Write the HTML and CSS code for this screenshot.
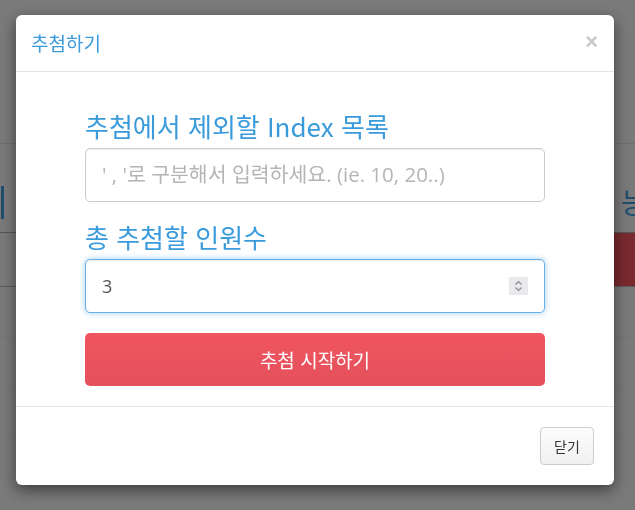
FILE: index.html
```html
<!DOCTYPE html>
<html lang="ko">
<head>
<meta charset="utf-8">
<title>추첨하기</title>
<link rel="stylesheet" href="styles.css">
</head>
<body>
<div class="page">
  <div class="page-top"></div>
  <div class="page-hero">
    <span class="hero-bar"></span>
    <span class="hero-right"><span class="hero-bar"></span><span class="hero-text">능</span></span>
  </div>
  <div class="page-actions"><span class="page-red"></span></div>
  <div class="page-row"></div>
  <div class="page-row"></div>
  <div class="page-row"></div>
  <div class="page-row"></div>
</div>
<div class="backdrop"></div>
<div class="modal-wrap">
  <div class="modal">
    <div class="modal-header">
      <h4 class="modal-title">추첨하기</h4>
      <span class="close">×</span>
    </div>
    <div class="modal-body">
      <div class="form">
        <label class="form-label">추첨에서 제외할 Index 목록</label>
        <input class="form-input" type="text" placeholder="' , '로 구분해서 입력하세요. (ie. 10, 20..)">
        <label class="form-label">총 추첨할 인원수</label>
        <div class="number-field">
          <input class="form-input focused" type="text" value="3">
          <span class="spinner">
            <svg width="19" height="18" viewBox="0 0 19 18"><path d="M6.5 7.5 L9.5 4.5 L12.5 7.5" fill="none" stroke="#8a8a90" stroke-width="1.2"/><path d="M6.5 10.5 L9.5 13.5 L12.5 10.5" fill="none" stroke="#8a8a90" stroke-width="1.2"/></svg>
          </span>
        </div>
        <button class="btn-start">추첨 시작하기</button>
      </div>
    </div>
    <div class="modal-footer">
      <button class="btn-close">닫기</button>
    </div>
  </div>
</div>
</body>
</html>
```
FILE: styles.css
```css
* { box-sizing: border-box; }
html, body { margin: 0; padding: 0; }
body {
  width: 635px;
  height: 510px;
  overflow: hidden;
  background: #f4f4f4;
  font-family: "Noto Sans CJK KR", "Open Sans", sans-serif;
}
.page { width: 635px; }
.page-top { height: 144px; border-bottom: 1px solid #dcdcdc; }
.page-hero {
  height: 89px;
  display: flex;
  justify-content: space-between;
  align-items: flex-end;
  padding: 0 0 13px 1px;
  border-bottom: 1px solid #aaaaaa;
}
.hero-bar { display: block; width: 3px; height: 33px; background: #3d9bd8; }
.hero-right { display: flex; align-items: center; gap: 7px; width: 21px; overflow: hidden; }
.hero-text { color: #3d9bd8; font-size: 28px; line-height: 33px; }
.page-actions {
  height: 54px;
  display: flex;
  justify-content: flex-end;
  border-bottom: 1px solid #b6b6b6;
}
.page-red { width: 21px; background: #f2545f; }
.page-row { height: 50px; border-bottom: 1px solid #ececec; }

.backdrop { position: fixed; inset: 0; background: rgba(0, 0, 0, 0.5); }
.modal-wrap { position: fixed; inset: 0; padding: 15px 0 0 16px; }
.modal {
  width: 598px;
  background: #fff;
  border-radius: 6px;
  box-shadow: 0 5px 15px rgba(0, 0, 0, 0.5);
}
.modal-header {
  height: 57px;
  display: flex;
  align-items: center;
  justify-content: space-between;
  padding: 0 16px 0 15px;
  border-bottom: 1px solid #e5e5e5;
}
.modal-title {
  margin: 0;
  font-size: 19px;
  font-weight: normal;
  color: #3a9bdc;
  line-height: 24px;
}
.close {
  font-family: "Liberation Sans", sans-serif;
  font-size: 22px;
  font-weight: bold;
  color: #c8c8c8;
  line-height: 1;
  margin-top: -2px;
}
.modal-body { padding: 38px 0 20px; }
.form { width: 460px; margin: 0 auto; display: flex; flex-direction: column; }
.form-label {
  display: block;
  font-size: 26px;
  line-height: 32px;
  color: #3a9bdc;
  margin-bottom: 6px;
}
.form-input {
  display: block;
  width: 460px;
  height: 54px;
  margin: 0 0 19px;
  padding: 0 16px;
  border: 1px solid #cccccc;
  border-radius: 5px;
  font-family: "Open Sans", "Noto Sans CJK KR", sans-serif;
  font-size: 18px;
  color: #555;
  background: #fff;
  outline: none;
  box-shadow: inset 0 1px 1px rgba(0, 0, 0, 0.075);
}
.form-input::placeholder { color: #b5b5b5; font-size: 20.5px; }
.form-input.focused {
  border-color: #66afe9;
  box-shadow: inset 0 1px 1px rgba(0, 0, 0, 0.075), 0 0 6px rgba(102, 175, 233, 0.6);
}
.number-field { position: relative; }
.spinner {
  position: absolute;
  left: 424px;
  top: 18px;
  width: 19px;
  height: 18px;
  background: #e9e9ee;
  display: block;
}
.spinner svg { display: block; }
.btn-start {
  display: block;
  width: 460px;
  height: 53px;
  margin-top: 1px;
  border: none;
  border-radius: 5px;
  background: linear-gradient(#f0555f, #e4505c);
  color: #fff;
  font-family: "Noto Sans CJK KR", sans-serif;
  font-size: 19px;
}
.modal-footer {
  border-top: 1px solid #e5e5e5;
  padding: 20px 20px 20px;
  display: flex;
  justify-content: flex-end;
}
.btn-close {
  width: 54px;
  height: 38px;
  padding: 0;
  border: 1px solid #cccccc;
  border-radius: 4px;
  background: linear-gradient(#fdfdfd, #f0f0f0);
  color: #333;
  font-family: "Noto Sans CJK KR", sans-serif;
  font-size: 14px;
}
```
